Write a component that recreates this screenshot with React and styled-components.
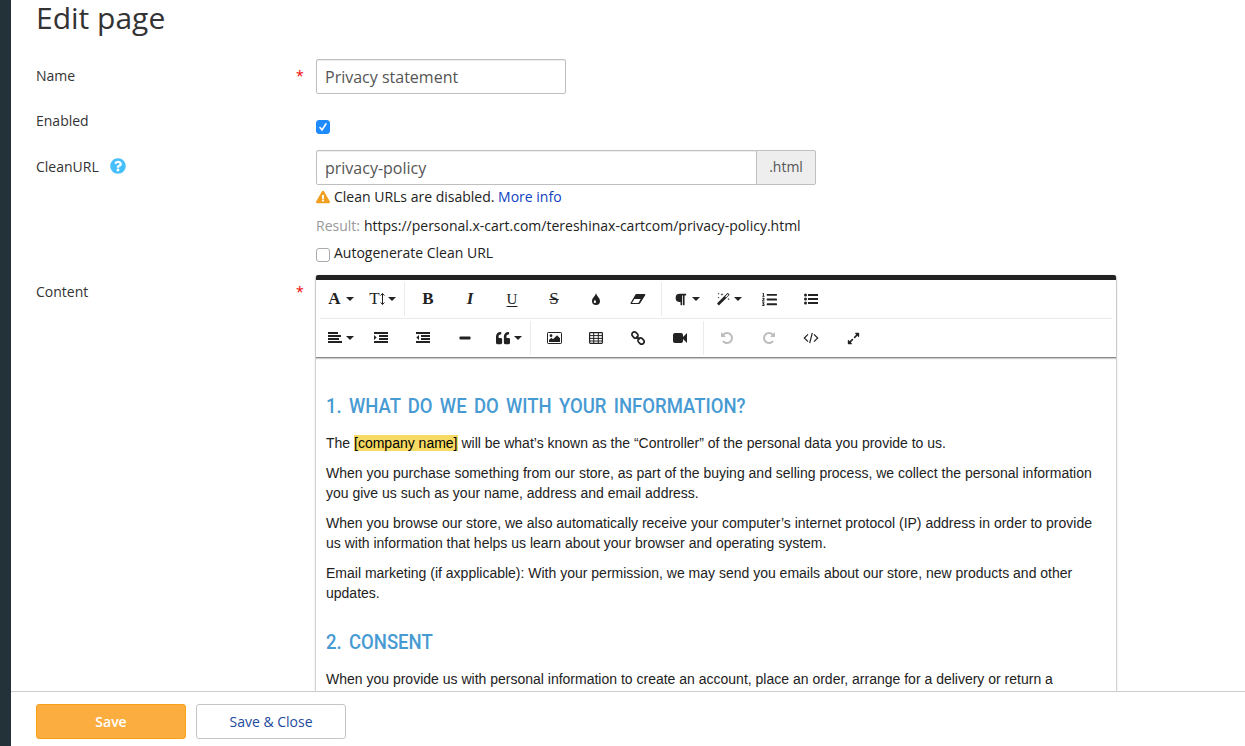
import React from 'react';
import styled, { createGlobalStyle, css } from 'styled-components';
import {
  FaListOl, FaQuoteLeft, FaParagraph, FaExpandAlt,
  FaQuestionCircle, FaExclamationTriangle,
} from 'react-icons/fa';

const GlobalStyle = createGlobalStyle`
  * { box-sizing: border-box; }
  body { margin: 0; background: #fff; overflow: hidden; }
`;

const Page = styled.div`
  display: flex;
  height: 746px;
  overflow: hidden;
  color: #333;
  font: 14px/20px "Open Sans", sans-serif;
`;
const Sidebar = styled.div`
  width: 11px;
  flex: none;
  background: #233239;
`;
const Main = styled.main`
  flex: 1;
  min-width: 0;
  display: flex;
  flex-direction: column;
`;
const Content = styled.div`
  flex: 1;
  min-height: 0;
  overflow: hidden;
  padding-left: 25px;
`;
const Title = styled.h1`
  margin: 0;
  height: 59px;
  font-size: 30px;
  line-height: 36px;
  font-weight: 400;
`;
const Row = styled.div`
  display: grid;
  grid-template-columns: 260px 20px 800px;
  height: ${(p) => p.$height}px;
`;
const Label = styled.div`
  display: flex;
  align-items: center;
  height: 20px;
  margin-top: ${(p) => p.$top}px;
  svg { margin: -3px 0 0 11px; color: #46bffb; }
`;
const Required = styled.span`
  margin-top: ${(p) => p.$top}px;
  color: #f00000;
`;
const Field = styled.div`
  display: flex;
  flex-direction: column;
  align-items: flex-start;
`;
const Input = styled.input`
  width: ${(p) => p.$width}px;
  height: 35px;
  padding: 0 8px;
  border: 1px solid #bfbfbf;
  border-radius: ${(p) => (p.$joined ? '2px 0 0 2px' : '2px')};
  box-shadow: inset 0 1px 1px rgba(0, 0, 0, 0.075);
  color: #555;
  font: 16px "Open Sans", sans-serif;
  outline: none;
`;
const InputGroup = styled.div`
  display: flex;
`;
const Addon = styled.span`
  width: 60px;
  height: 35px;
  margin-left: -1px;
  border: 1px solid #bfbfbf;
  border-radius: 0 2px 2px 0;
  background: #eee;
  color: #555;
  line-height: 32px;
  text-align: center;
`;
const CheckSquare = styled.span`
  display: flex;
  align-items: center;
  justify-content: center;
  flex: none;
  width: 14px;
  height: 14px;
  margin-top: ${(p) => p.$top || 0}px;
  border-radius: 3px;
  border: 1px solid ${(p) => (p.$checked ? '#1e88fb' : '#aaa')};
  background: ${(p) => (p.$checked ? '#1e8cff' : '#fff')};
`;
const Hint = styled.div`
  display: flex;
  align-items: center;
  gap: 4px;
  height: 20px;
  margin-top: ${(p) => p.$top}px;
  color: #222;
  white-space: nowrap;
`;
const MoreLink = styled.a`
  color: #0e3fbf;
`;
const Muted = styled.span`
  color: #999;
`;

const Editor = styled.div`
  width: 800px;
  height: 500px;
  border-top: 5px solid #222;
  border-radius: 2px;
  color: #222;
  box-shadow: 0 1px 3px rgba(0, 0, 0, 0.12), 0 1px 1px 1px rgba(0, 0, 0, 0.16);
`;
const Toolbar = styled.div`
  height: 78px;
  padding: 0 4px;
  border-bottom: 1px solid #888;
  box-shadow: 0 1px 1px rgba(0, 0, 0, 0.2);
`;
const ToolRow = styled.div`
  display: flex;
  height: 39px;
  border-bottom: ${(p) => (p.$line ? '1px solid #ebebeb' : '0')};
`;
const Tool = styled.span`
  display: flex;
  align-items: center;
  justify-content: center;
  flex: none;
  width: ${(p) => p.$width || 42}px;
  height: 38px;
  color: ${(p) => (p.$disabled ? '#bdbdbd' : '#222')};
  ${(p) => p.$menu && css`
    justify-content: flex-start;
    padding-left: ${p.$pad || 7}px;
  `}
`;
const IconSlot = styled.span`
  display: flex;
  justify-content: center;
  width: 15px;
  margin-right: 4px;
`;
const Caret = styled.span`
  border: 4px solid transparent;
  border-top-color: #222;
  border-bottom: 0;
`;
const Divider = styled.span`
  flex: none;
  width: 1px;
  height: 34px;
  margin: 2px ${(p) => p.$after}px 0 ${(p) => p.$before}px;
  background: #ebebeb;
`;
const Letter = styled.span`
  font: ${(p) => (p.$italic ? 'italic ' : '')}${(p) => p.$weight || 700} ${(p) => p.$size || 17}px/18px "Liberation Serif", serif;
  text-decoration: ${(p) => p.$line || 'none'};
  text-decoration-thickness: 1px;
  text-underline-offset: 2px;
`;
const HeightIcon = styled.span`
  display: flex;
  align-items: center;
  margin-left: 1px;
`;

const Document = styled.article`
  padding: 34px 10px 0;
  color: #222;
  font: 14px/20px "Liberation Sans", sans-serif;
  white-space: nowrap;
`;
const Heading = styled.h2`
  margin: ${(p) => p.$top || 0}px 0 13px;
  height: 28px;
  color: #479ad2;
  font: 500 20px/28px Roboto, sans-serif;
  word-spacing: 2.9px;
  transform: scaleX(0.925);
  transform-origin: left;
`;
const Paragraph = styled.p`
  margin: 0 0 10px;
`;
const TextLine = styled.span`
  display: block;
`;
const Mark = styled.mark`
  background: #f7da64;
  color: #000;
`;

const Footer = styled.footer`
  display: flex;
  gap: 10px;
  flex: none;
  height: 55px;
  padding: 12px 25px 0;
  border-top: 1px solid #ccc;
  background: #fff;
`;
const Button = styled.button`
  width: 150px;
  height: 35px;
  padding: 0;
  border: 1px solid ${(p) => (p.$primary ? '#f7a11a' : '#c4c4c4')};
  border-radius: 3px;
  background: ${(p) => (p.$primary ? '#fbad40' : '#fff')};
  color: ${(p) => (p.$primary ? '#fff' : '#224a9c')};
  font: ${(p) => (p.$primary ? 600 : 400)} 14px "Open Sans", sans-serif;
`;

const Svg = ({ w = 14, h = 14, children, ...rest }) => (
  <svg width={w} height={h} viewBox={`0 0 ${w} ${h}`} fill="currentColor" {...rest}>{children}</svg>
);
const Check = () => (
  <Svg w={12} h={12} fill="none" stroke="#fff" strokeWidth="1.6" strokeLinecap="round"><path d="M3 6.6 5 9 9 2.8" /></Svg>
);
const AlignIcon = () => (
  <Svg><path d="M0 1h10v2H0zM0 4h13v2H0zM0 7h11v2H0zM0 10h14v2H0z" /></Svg>
);
const IndentIcon = ({ out }) => (
  <Svg><path d="M0 1h14v2H0zM5 4h9v2H5zM5 7h9v2H5zM0 10h14v2H0z" /><path d={out ? 'M3 4v5L.3 6.5z' : 'M0 4v5l2.7-2.5z'} /></Svg>
);
const ListIcon = () => (
  <Svg><path d="M4 2h10v2H4zM4 6h10v2H4zM4 10h10v2H4z" /><circle cx="1.5" cy="3" r="1.5" /><circle cx="1.5" cy="7" r="1.5" /><circle cx="1.5" cy="11" r="1.5" /></Svg>
);
const MinusIcon = () => <Svg><rect x="1.5" y="5.5" width="11" height="3" rx=".8" /></Svg>;
const DropIcon = () => (
  <Svg><path fillRule="evenodd" d="M7 1C6.6 3.7 3 6 3 9a4 4 0 0 0 8 0C11 6 7.4 3.7 7 1zM5.2 8.7c-.9 1.2-.2 2.4.8 2.4s1.4-1.4.5-2.4l-.6-1z" /></Svg>
);
const EraserIcon = () => (
  <Svg w={16}><path fillRule="evenodd" d="M6.3 2h8.2q1.2 0 .7 1.2L10.3 11q-.5.9-1.4.9H1.2Q0 12 .7 10.7L5.2 3Q5.6 2 6.3 2zM4.4 7 2 11h6.4l2.3-4z" /></Svg>
);
const WandIcon = () => (
  <Svg>
    <path fillRule="evenodd" d="M11.2 1.3q.5-.4 1 0l1 1q.4.5 0 1L3.4 13.1q-.5.4-1 0l-1-1q-.4-.5 0-1zM11.7 2.1 9.2 4.6l.8.8 2.5-2.5z" />
    <path d="M6 .9l.4 1.1 1.1.4-1.1.4L6 3.9l-.4-1.1-1.1-.4L5.6 2zM2.6.6l.3.8.8.3-.8.3-.3.8-.3-.8-.8-.3.8-.3zM2.6 4.6l.3.8.8.3-.8.3-.3.8-.3-.8-.8-.3.8-.3zM12.6 6l.3.8.8.3-.8.3-.3.8-.3-.8-.8-.3.8-.3z" />
  </Svg>
);
const ImageIcon = () => (
  <Svg w={15}><rect x=".5" y="1.5" width="14" height="11" rx=".7" fill="none" stroke="currentColor" /><circle cx="4" cy="4.7" r="1.4" /><path d="M2 11V9l2.4-2.2L6 8.3l4-4.1L13 7.3V11z" /></Svg>
);
const TableIcon = () => (
  <Svg fill="none" stroke="currentColor"><rect x=".6" y="1.6" width="12.8" height="10.8" rx=".8" strokeWidth="1.2" /><path d="M1 4.6h12M1 7.4h12M1 10h12M4.7 2v10M9.3 2v10" /></Svg>
);
const LinkIcon = () => (
  <Svg fill="none" stroke="currentColor" strokeWidth="1.7"><g transform="rotate(45 7 7)"><rect x="-.6" y="4.5" width="6.6" height="5" rx="2.5" /><rect x="8" y="4.5" width="6.6" height="5" rx="2.5" /><path d="M4.7 7h4.6" /></g></Svg>
);
const VideoIcon = () => (
  <Svg><rect x="0" y="2" width="10" height="10" rx="2" /><path d="M9 7 14 2v10z" /></Svg>
);
const UndoIcon = ({ redo }) => (
  <svg width="14" height="14" viewBox="0 0 1792 1792" fill="currentColor" transform={redo ? 'scale(-1 1)' : undefined}>
    <path d="M1664 896q0 156-61 298t-164 245-245 164-298 61q-172 0-327-72.5t-264-204.5q-7-10-6.5-22.5t8.5-20.5l137-138q10-9 25-9 16 2 23 12 73 95 179 147t225 52q104 0 198.5-40.5t163.5-109.5 109.5-163.5 40.5-198.5-40.5-198.5-109.5-163.5-163.5-109.5-198.5-40.5q-98 0-188 35.5t-160 101.5l137 138q31 30 14 69-17 40-59 40h-448q-26 0-45-19t-19-45v-448q0-42 40-59 39-17 69 14l130 129q107-101 244.5-156.5t284.5-55.5q156 0 298 61t245 164 164 245 61 298z" />
  </svg>
);
const CodeIcon = () => (
  <Svg w={16} fill="none" stroke="currentColor" strokeWidth="1.2"><path d="M5 3.4 1.3 7 5 10.6M11 3.4 14.7 7 11 10.6M9.3 1.8 6.7 12.2" /></Svg>
);
const UpDownIcon = () => (
  <Svg w={5} fill="none" stroke="currentColor"><path d="M2.5 2v10M.6 3.6 2.5 1.4l1.9 2.2M.6 10.4l1.9 2.2 1.9-2.2" /></Svg>
);

const MenuTool = ({ pad, width, children }) => (
  <Tool $menu $pad={pad} $width={width}><IconSlot>{children}</IconSlot><Caret /></Tool>
);

export default function App() {
  return (
    <Page>
      <GlobalStyle />
      <Sidebar />
      <Main>
        <Content>
          <Title>Edit page</Title>
          <Row $height={61}>
            <Label $top={7}>Name</Label>
            <Required $top={7}>*</Required>
            <Field><Input $width={250} defaultValue="Privacy statement" /></Field>
          </Row>
          <Row $height={30}>
            <Label $top={-9}>Enabled</Label>
            <span />
            <Field><CheckSquare $checked><Check /></CheckSquare></Field>
          </Row>
          <Row $height={125}>
            <Label $top={7}>CleanURL <FaQuestionCircle size={16} /></Label>
            <span />
            <Field>
              <InputGroup>
                <Input $width={441} $joined defaultValue="privacy-policy" />
                <Addon>.html</Addon>
              </InputGroup>
              <Hint $top={2}>
                <FaExclamationTriangle size={14} color="#f0a01e" />
                <span>Clean URLs are disabled. <MoreLink>More info</MoreLink></span>
              </Hint>
              <Hint $top={9}><Muted>Result:</Muted><span>https://personal.x-cart.com/tereshinax-cartcom/privacy-policy.html</span></Hint>
              <Hint $top={7}><CheckSquare $top={4} />Autogenerate Clean URL</Hint>
            </Field>
          </Row>
          <Row $height={500}>
            <Label $top={7}>Content</Label>
            <Required $top={7}>*</Required>
            <Editor>
              <Toolbar>
                <ToolRow $line>
                  <MenuTool><Letter>A</Letter></MenuTool>
                  <MenuTool><HeightIcon><Letter $weight={400}>T</Letter><UpDownIcon /></HeightIcon></MenuTool>
                  <Divider $before={0} $after={2} />
                  <Tool><Letter>B</Letter></Tool>
                  <Tool><Letter $italic>I</Letter></Tool>
                  <Tool><Letter $size={15} $weight={400} $line="underline">U</Letter></Tool>
                  <Tool><Letter $weight={400} $line="line-through">S</Letter></Tool>
                  <Tool><DropIcon /></Tool>
                  <Tool><EraserIcon /></Tool>
                  <Divider $before={2} $after={3} />
                  <MenuTool pad={8}><FaParagraph size={13} /></MenuTool>
                  <MenuTool pad={8} width={41}><WandIcon /></MenuTool>
                  <Tool><FaListOl size={15} /></Tool>
                  <Tool><ListIcon /></Tool>
                </ToolRow>
                <ToolRow>
                  <MenuTool width={40}><AlignIcon /></MenuTool>
                  <Tool><IndentIcon /></Tool>
                  <Tool><IndentIcon out /></Tool>
                  <Tool><MinusIcon /></Tool>
                  <MenuTool pad={9} width={44}><FaQuoteLeft size={14} /></MenuTool>
                  <Divider $before={0} $after={2} />
                  <Tool><ImageIcon /></Tool>
                  <Tool><TableIcon /></Tool>
                  <Tool><LinkIcon /></Tool>
                  <Tool><VideoIcon /></Tool>
                  <Divider $before={2} $after={2} />
                  <Tool $disabled><UndoIcon /></Tool>
                  <Tool $disabled><UndoIcon redo /></Tool>
                  <Tool><CodeIcon /></Tool>
                  <Tool><FaExpandAlt size={13} /></Tool>
                </ToolRow>
              </Toolbar>
              <Document>
                <Heading>1. WHAT DO WE DO WITH YOUR INFORMATION?</Heading>
                <Paragraph><TextLine>The <Mark>[company name]</Mark> will be what’s known as the “Controller” of the personal data you provide to us.</TextLine></Paragraph>
                <Paragraph>
                  <TextLine>When you purchase something from our store, as part of the buying and selling process, we collect the personal information</TextLine>
                  <TextLine>you give us such as your name, address and email address.</TextLine>
                </Paragraph>
                <Paragraph>
                  <TextLine>When you browse our store, we also automatically receive your computer’s internet protocol (IP) address in order to provide</TextLine>
                  <TextLine>us with information that helps us learn about your browser and operating system.</TextLine>
                </Paragraph>
                <Paragraph>
                  <TextLine>Email marketing (if axpplicable): With your permission, we may send you emails about our store, new products and other</TextLine>
                  <TextLine>updates.</TextLine>
                </Paragraph>
                <Heading $top={25}>2. CONSENT</Heading>
                <Paragraph><TextLine>When you provide us with personal information to create an account, place an order, arrange for a delivery or return a</TextLine></Paragraph>
              </Document>
            </Editor>
          </Row>
        </Content>
        <Footer>
          <Button $primary>Save</Button>
          <Button>Save &amp; Close</Button>
        </Footer>
      </Main>
    </Page>
  );
}
